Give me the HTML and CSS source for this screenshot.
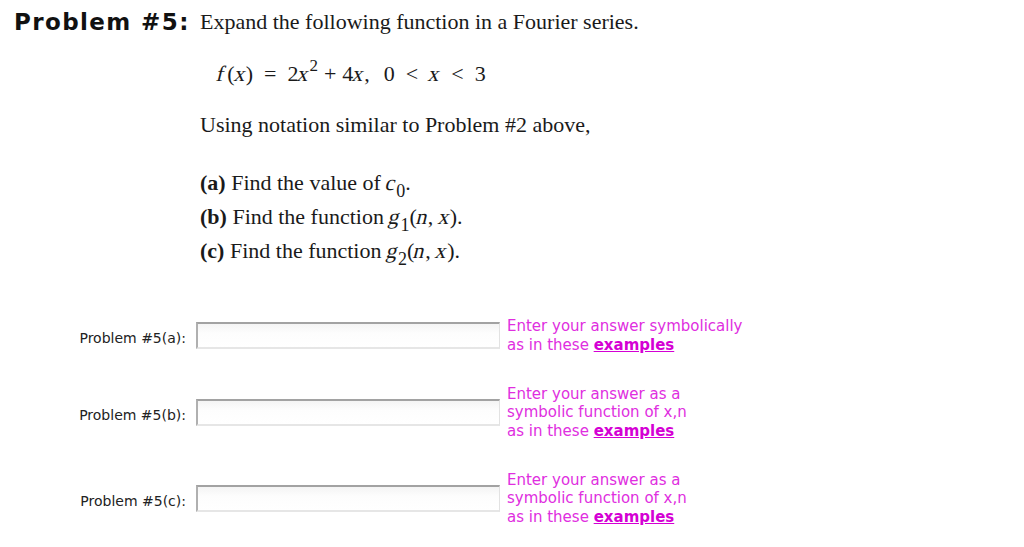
FILE: index.html
```html
<!DOCTYPE html>
<html>
<head>
<meta charset="utf-8">
<link rel="stylesheet" href="styles.css">
</head>
<body>
<div class="page">
  <div class="problem">
    <div class="title">Problem #5:</div>
    <div class="statement">
      <p class="intro">Expand the following function in a Fourier series.</p>
      <p class="formula"><span class="v fn">f</span>(<span class="v">x</span>)<span class="sp">=</span>2<span class="v">x</span><sup>2</sup><span class="op">+</span>4<span class="v">x</span>,<span class="sp2"></span>0<span class="sp">&lt;</span><span class="v">x</span><span class="sp">&lt;</span>3</p>
      <p class="using">Using notation similar to Problem #2 above,</p>
      <ol class="parts">
        <li><b>(a)</b> Find the value of <span class="v">c</span><sub>0</sub>.</li>
        <li><b>(b)</b> Find the function <span class="v">g</span><sub>1</sub>(<span class="v">n</span>, <span class="v">x</span>).</li>
        <li><b>(c)</b> Find the function <span class="v">g</span><sub>2</sub>(<span class="v">n</span>, <span class="v">x</span>).</li>
      </ol>
    </div>
  </div>
  <div class="answers">
    <div class="row row-a">
      <label class="label" for="a">Problem #5(a):</label>
      <input class="field" id="a" type="text">
      <div class="hint">Enter your answer symbolically<br>as in these <a href="#">examples</a></div>
    </div>
    <div class="row row-b">
      <label class="label" for="b">Problem #5(b):</label>
      <input class="field" id="b" type="text">
      <div class="hint">Enter your answer as a<br>symbolic function of x,n<br>as in these <a href="#">examples</a></div>
    </div>
    <div class="row row-c">
      <label class="label" for="c">Problem #5(c):</label>
      <input class="field" id="c" type="text">
      <div class="hint">Enter your answer as a<br>symbolic function of x,n<br>as in these <a href="#">examples</a></div>
    </div>
  </div>
</div>
</body>
</html>
```
FILE: styles.css
```css
html, body {
  margin: 0;
  padding: 0;
  background: #ffffff;
}

.page {
  width: 1024px;
  height: 547px;
  overflow: hidden;
}

.problem {
  display: flex;
  align-items: flex-start;
  padding: 4px 0 0 14px;
}

.title {
  width: 186px;
  font-family: "DejaVu Sans", Verdana, sans-serif;
  font-weight: bold;
  font-size: 23px;
  letter-spacing: 1.4px;
  line-height: 36px;
  color: #111;
  white-space: nowrap;
}

.statement {
  font-family: "Liberation Serif", "Times New Roman", serif;
  font-size: 22px;
  color: #1a1a1a;
}

.statement p {
  margin: 0;
}

.v {
  display: inline-block;
  font-style: normal;
  transform: skewX(-14deg);
}

.intro {
  line-height: 36px;
}

.formula {
  margin-top: 16px !important;
  padding-left: 17px;
  line-height: 36px;
}

.formula .fn {
  margin-right: 3px;
}

.formula sup {
  font-size: 17px;
  position: relative;
  top: -2px;
  line-height: 0;
}

.formula .sp {
  padding: 0 11px;
}

.formula .op {
  padding: 0 6px;
}

.formula .sp2 {
  display: inline-block;
  width: 14px;
}

.using {
  margin-top: 15px !important;
  line-height: 36px;
}

.parts {
  list-style: none;
  margin: 23px 0 0 0;
  padding: 0;
}

.parts li {
  line-height: 34px;
}

.parts b {
  font-weight: bold;
}

.parts sub {
  font-size: 18px;
  line-height: 0;
  position: relative;
  top: 2px;
}

.answers {
  margin-top: 49px;
  display: flex;
  flex-direction: column;
  gap: 30.5px;
}

.row {
  display: grid;
  grid-template-columns: 186px 304px auto;
  column-gap: 10px;
  align-items: center;
}

.row .hint {
  margin-left: -3px;
}

.label {
  text-align: right;
  font-family: "DejaVu Sans", Verdana, sans-serif;
  font-size: 14px;
  color: #222;
  padding-top: 5px;
}

.field {
  box-sizing: border-box;
  width: 304px;
  height: 27px;
  margin: 0;
  padding: 0;
  border-top: 2px solid #a2a2a2;
  border-left: 2px solid #b0b0b0;
  border-right: 1px solid #e2e2e2;
  border-bottom: 2px solid #e6e6e6;
  background: linear-gradient(#f4f4f4, #fdfdfd 40%, #ffffff);
  outline: none;
}

.hint {
  font-family: "DejaVu Sans", Verdana, sans-serif;
  font-size: 15px;
  line-height: 18.5px;
  color: #e02ee0;
}

.hint a {
  color: #d400d4;
  font-weight: bold;
  text-decoration: underline;
}
```
